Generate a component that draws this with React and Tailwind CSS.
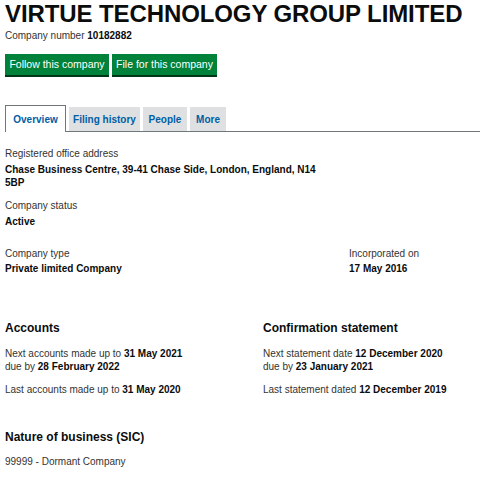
const font = { fontFamily: '"Liberation Sans", Arial, sans-serif' }

const tabs = [
  { name: 'Overview', w: 'w-[61px]' },
  { name: 'Filing history', w: 'w-[71px]' },
  { name: 'People', w: 'w-[44px]' },
  { name: 'More', w: 'w-[36px]' },
]

function Label({ children }) {
  return <div className="text-[10px] leading-[12px] text-[#333]">{children}</div>
}

function Value({ children }) {
  return <div className="text-[10px] leading-[13px] font-bold text-[#0b0c0c]">{children}</div>
}

export default function App() {
  return (
    <div className="w-[480px] h-[480px] overflow-hidden bg-white px-[5px]" style={font}>
      <h1 className="pt-[1px] text-[24px] leading-[26px] font-bold text-[#0b0c0c] tracking-[-0.1px]">
        VIRTUE TECHNOLOGY GROUP LIMITED
      </h1>
      <p className="mt-[3px] text-[10px] leading-[12px] text-[#333]">
        Company number <b className="text-[#0b0c0c]">10182882</b>
      </p>

      <div className="mt-[12px] flex gap-[3px]">
        <button className="w-[104px] h-[21px] bg-[#00823b] text-white text-[10.5px] shadow-[0_2px_0_#003618]">
          Follow this company
        </button>
        <button className="w-[105px] h-[21px] bg-[#00823b] text-white text-[10.5px] shadow-[0_2px_0_#003618]">
          File for this company
        </button>
      </div>

      <div className="mt-[30px] h-[27px] flex items-end gap-[3px] border-b border-[#6f777b] -mr-[5px]">
        {tabs.map((t, i) =>
          i === 0 ? (
            <div
              key={t.name}
              className={`${t.w} h-[27px] -mb-px flex items-center justify-center bg-white border border-b-0 border-[#6f777b] text-[10px] font-bold text-[#005ea5]`}
            >
              {t.name}
            </div>
          ) : (
            <div
              key={t.name}
              className={`${t.w} h-[24px] flex items-center justify-center bg-[#dee0e2] text-[10px] font-bold text-[#005ea5]`}
            >
              {t.name}
            </div>
          )
        )}
      </div>

      <div className="mt-[16px]">
        <Label>Registered office address</Label>
        <div className="mt-[3px] w-[320px]">
          <Value>Chase Business Centre, 39-41 Chase Side, London, England, N14 5BP</Value>
        </div>
      </div>

      <div className="mt-[11px]">
        <Label>Company status</Label>
        <div className="mt-[3px]">
          <Value>Active</Value>
        </div>
      </div>

      <div className="mt-[20px] flex">
        <div className="w-[344px]">
          <Label>Company type</Label>
          <div className="mt-[2px]">
            <Value>Private limited Company</Value>
          </div>
        </div>
        <div>
          <Label>Incorporated on</Label>
          <div className="mt-[2px]">
            <Value>17 May 2016</Value>
          </div>
        </div>
      </div>

      <div className="mt-[46px] flex">
        <div className="w-[258px]">
          <h2 className="text-[12px] leading-[14px] font-bold text-[#0b0c0c]">Accounts</h2>
          <div className="mt-[12px] text-[10px] leading-[13px] text-[#333]">
            Next accounts made up to <b className="text-[#0b0c0c]">31 May 2021</b>
            <br />
            due by <b className="text-[#0b0c0c]">28 February 2022</b>
          </div>
          <div className="mt-[10px] text-[10px] leading-[13px] text-[#333]">
            Last accounts made up to <b className="text-[#0b0c0c]">31 May 2020</b>
          </div>
        </div>
        <div>
          <h2 className="text-[12px] leading-[14px] font-bold text-[#0b0c0c]">Confirmation statement</h2>
          <div className="mt-[12px] text-[10px] leading-[13px] text-[#333]">
            Next statement date <b className="text-[#0b0c0c]">12 December 2020</b>
            <br />
            due by <b className="text-[#0b0c0c]">23 January 2021</b>
          </div>
          <div className="mt-[10px] text-[10px] leading-[13px] text-[#333]">
            Last statement dated <b className="text-[#0b0c0c]">12 December 2019</b>
          </div>
        </div>
      </div>

      <h2 className="mt-[34px] text-[12px] leading-[14px] font-bold text-[#0b0c0c]">Nature of business (SIC)</h2>
      <div className="mt-[12px] text-[10px] leading-[12px] text-[#333]">99999 - Dormant Company</div>
    </div>
  )
}
